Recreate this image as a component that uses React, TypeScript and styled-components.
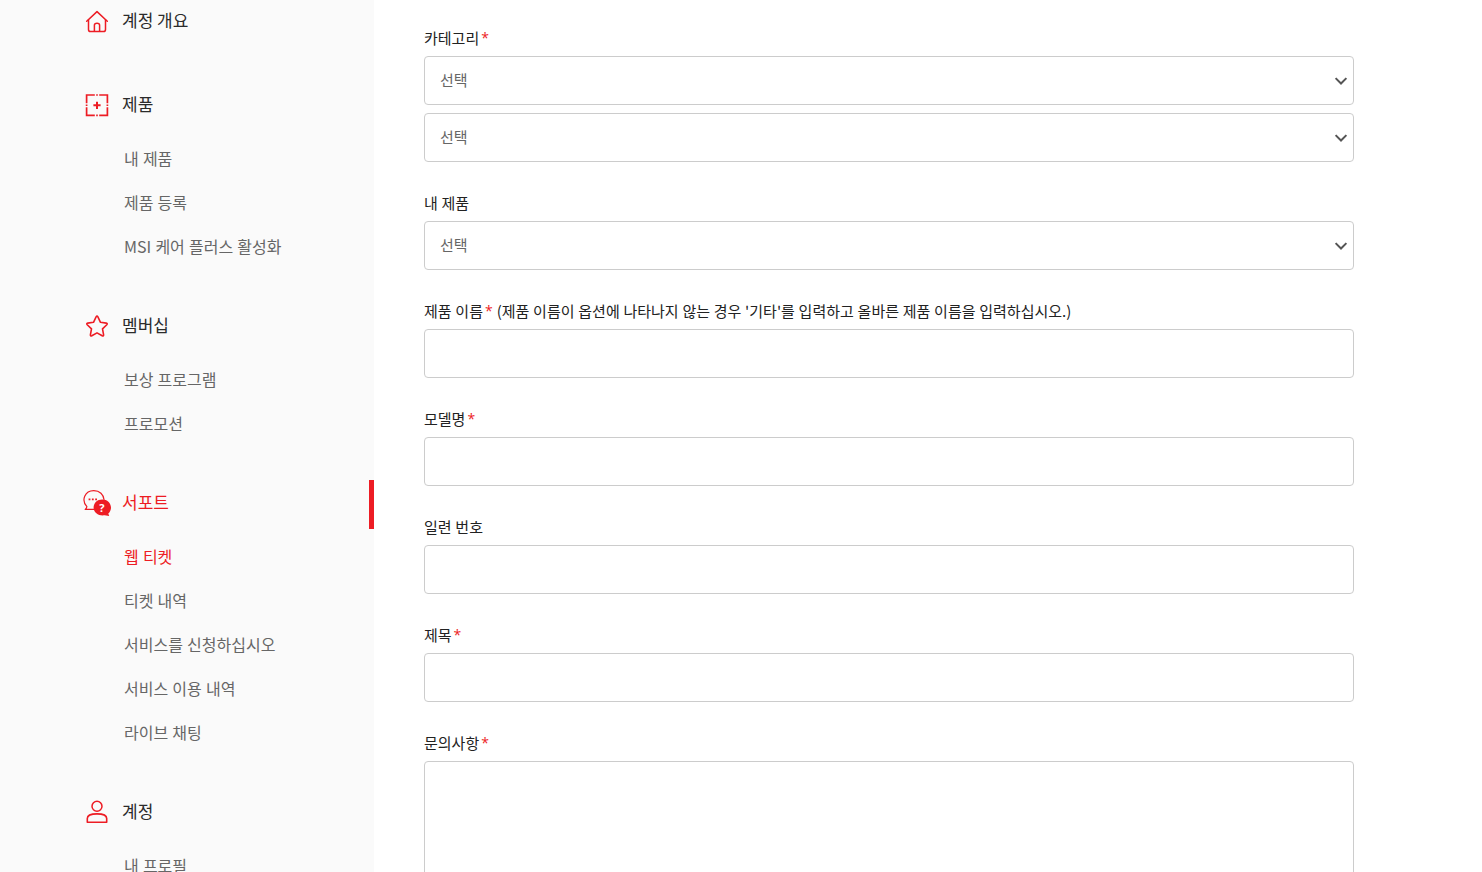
import { useState } from 'react';
import type { ReactNode } from 'react';
import styled, { createGlobalStyle } from 'styled-components';

interface MenuType {
  title: string;
  icon: ReactNode;
  items: string[];
}
interface FieldType {
  label: string;
  required?: boolean;
  hint?: string;
  type: 'select' | 'input' | 'textarea';
  count?: number;
}

const HomeIcon = () => (
  <Icon viewBox="0 0 30 30">
    <path d="M3.7 14.2 14 4.6l10.3 9.6" />
    <path d="M5.5 12.8v9.6q0 2.1 2.1 2.1h12.8q2.1 0 2.1-2.1v-9.6" />
    <path d="M11.4 24.3v-6q0-2.1 2.6-2.1t2.6 2.1v6" />
  </Icon>
);
const ProductIcon = () => (
  <Icon viewBox="0 0 30 30">
    <g strokeWidth="1.7" strokeLinecap="butt" strokeLinejoin="miter">
      <path d="M11.8 4H3.6v8.2M16.2 4h8.2v8.2M11.8 24.4H3.6v-8.2M16.2 24.4h8.2v-8.2" />
      <path d="M13.2 4h1.6M13.2 24.4h1.6M3.6 13.4V15M24.4 13.4V15" />
      <path d="M14 10.7v7.2M10.4 14.3h7.2" strokeWidth="2" />
    </g>
  </Icon>
);
const StarIcon = () => (
  <Icon viewBox="0 0 30 30">
    <path
      d="M13.1 4.8q.9-1.5 1.8 0l2.6 5.5 5.8.8q1.6.4.5 1.6l-4.3 4.2 1.1 5.9q.1 1.7-1.4 1L14 20.9l-5.2 2.9q-1.5.7-1.4-1l1.1-5.9-4.3-4.2q-1.1-1.2.5-1.6l5.8-.8z"
      strokeWidth="1.6"
    />
  </Icon>
);
const SupportIcon = () => (
  <Icon viewBox="0 0 30 30">
    <path
      d="M11.6 20.4H2.2q1.4-1 1.7-2.7C-2 11.4 1.7 1.6 10.8 1.6c6 0 9.7 4 10.2 8.9"
      strokeWidth="1.2"
    />
    <g fill="#ed1c24" stroke="none">
      <path d="M5.6 9.4h1.8v1.8H5.6zM8.9 9.4h1.8v1.8H8.9zM12.2 9.4H14v1.8h-1.8z" />
      <path d="M19.2 10.5c5 0 8.8 3.5 8.8 8.1 0 2.4-1 4.5-2.7 6l.9 2.5-4.6-.8c-6 .9-11-2.6-11-7.7 0-4.6 3.6-8.1 8.6-8.1z" />
    </g>
    <text x="18.8" y="22.5" textAnchor="middle">
      ?
    </text>
  </Icon>
);
const UserIcon = () => (
  <Icon viewBox="0 0 30 30">
    <circle cx="14" cy="8.2" r="5" />
    <path d="M4.3 24.3v-3.8c0-3 4-4.6 9.7-4.6s9.7 1.6 9.7 4.6v3.8z" strokeWidth="1.6" />
  </Icon>
);

const menus: MenuType[] = [
  { title: '계정 개요', icon: <HomeIcon />, items: [] },
  { title: '제품', icon: <ProductIcon />, items: ['내 제품', '제품 등록', 'MSI 케어 플러스 활성화'] },
  { title: '멤버십', icon: <StarIcon />, items: ['보상 프로그램', '프로모션'] },
  {
    title: '서포트',
    icon: <SupportIcon />,
    items: ['웹 티켓', '티켓 내역', '서비스를 신청하십시오', '서비스 이용 내역', '라이브 채팅'],
  },
  { title: '계정', icon: <UserIcon />, items: ['내 프로필'] },
];

const fields: FieldType[] = [
  { label: '카테고리', required: true, type: 'select', count: 2 },
  { label: '내 제품', type: 'select' },
  {
    label: '제품 이름',
    required: true,
    hint: "(제품 이름이 옵션에 나타나지 않는 경우 '기타'를 입력하고 올바른 제품 이름을 입력하십시오.)",
    type: 'input',
  },
  { label: '모델명', required: true, type: 'input' },
  { label: '일련 번호', type: 'input' },
  { label: '제목', required: true, type: 'input' },
  { label: '문의사항', required: true, type: 'textarea' },
];

const SelectBox = () => (
  <Select type="button">
    <span>선택</span>
    <svg width="14" height="10" viewBox="0 0 14 10">
      <path d="M1.6 2.1 7 7.5l5.4-5.4" fill="none" stroke="#555" strokeWidth="2" />
    </svg>
  </Select>
);

const App = () => {
  const [current, setCurrent] = useState('웹 티켓');

  return (
    <>
      <GlobalStyle />
      <Page>
        <Sidebar>
          {menus.map((menu) => (
            <Group key={menu.title}>
              <GroupTitle $active={menu.items.includes(current)}>
                {menu.icon}
                <span>{menu.title}</span>
              </GroupTitle>
              {menu.items.length != 0 && (
                <SubList>
                  {menu.items.map((item) => (
                    <SubItem key={item} $active={item == current} onClick={() => setCurrent(item)}>
                      {item}
                    </SubItem>
                  ))}
                </SubList>
              )}
            </Group>
          ))}
        </Sidebar>
        <Form>
          {fields.map((field) => (
            <Field key={field.label}>
              <Label>
                {field.label}
                {field.required && <Required>*</Required>}
                {field.hint && <Hint>{field.hint}</Hint>}
              </Label>
              {field.type == 'select' &&
                Array.from({ length: field.count ?? 1 }, (_, i) => <SelectBox key={i} />)}
              {field.type == 'input' && <Input aria-label={field.label} />}
              {field.type == 'textarea' && <TextArea aria-label={field.label} />}
            </Field>
          ))}
        </Form>
      </Page>
    </>
  );
};

const GlobalStyle = createGlobalStyle`
  * {
    box-sizing: border-box;
  }
  body {
    margin: 0;
    background: #fff;
    font-family: 'Noto Sans CJK KR', 'Noto Sans', sans-serif;
  }
`;

const Page = styled.div`
  display: flex;
  height: 100vh;
  overflow: hidden;
`;
const Sidebar = styled.nav`
  flex: none;
  width: 374px;
  background: #fafafa;
`;
const Group = styled.div`
  &:first-child {
    margin-top: -2px;
    margin-bottom: 35px;
  }
  & + &:not(:last-child) {
    margin-bottom: 34px;
  }
`;
const GroupTitle = styled.div<{ $active: boolean }>`
  display: flex;
  align-items: flex-start;
  gap: 9px;
  height: 49px;
  padding: 9px 0 0 83px;
  border-right: 5px solid ${({ $active }) => ($active ? '#ed1c24' : 'transparent')};
  color: ${({ $active }) => ($active ? '#ed1c24' : '#2b2b2b')};
  font-size: 17px;
  line-height: 26px;
  cursor: pointer;
`;
const Icon = styled.svg`
  flex: none;
  width: 30px;
  height: 30px;
  fill: none;
  stroke: #ed1c24;
  stroke-width: 1.5;
  stroke-linecap: round;
  stroke-linejoin: round;
  text {
    fill: #fff;
    stroke: none;
    font: bold 11px 'Open Sans', sans-serif;
  }
`;
const SubList = styled.ul`
  margin: 0;
  padding: 6px 0 0 124px;
  list-style: none;
`;
const SubItem = styled.li<{ $active: boolean }>`
  height: 44px;
  color: ${({ $active }) => ($active ? '#ed1c24' : '#666')};
  font-size: 16px;
  line-height: 42px;
  word-spacing: 0.6px;
  cursor: pointer;
`;
const Form = styled.form`
  display: flex;
  flex-direction: column;
  gap: 29px;
  width: 980px;
  padding: 26px 0 0 50px;
`;
const Field = styled.div`
  display: flex;
  flex-direction: column;
  gap: 8px;
`;
const Label = styled.div`
  height: 24px;
  margin-bottom: -2px;
  color: #222;
  font-size: 15px;
  line-height: 24px;
  word-spacing: 0.4px;
  white-space: nowrap;
`;
const Required = styled.span`
  margin-left: 2px;
  color: #ed1c24;
  font-family: 'Open Sans', sans-serif;
  font-size: 14px;
  line-height: 1;
  vertical-align: 1px;
`;
const Hint = styled.span`
  margin-left: 4px;
`;
const Select = styled.button`
  display: flex;
  align-items: center;
  justify-content: space-between;
  height: 49px;
  padding: 0 5px 2px 15px;
  border: 1px solid #ccc;
  border-radius: 4px;
  background: #fff;
  color: #666;
  font-family: inherit;
  font-size: 15px;
  svg {
    margin-top: 2px;
  }
`;
const Input = styled.input`
  height: 49px;
  padding: 0 15px;
  border: 1px solid #ccc;
  border-radius: 4px;
  font: inherit;
  outline: none;
`;
const TextArea = styled.textarea`
  height: 200px;
  padding: 15px;
  border: 1px solid #ccc;
  border-radius: 4px;
  font: inherit;
  outline: none;
  resize: none;
`;

export default App;
